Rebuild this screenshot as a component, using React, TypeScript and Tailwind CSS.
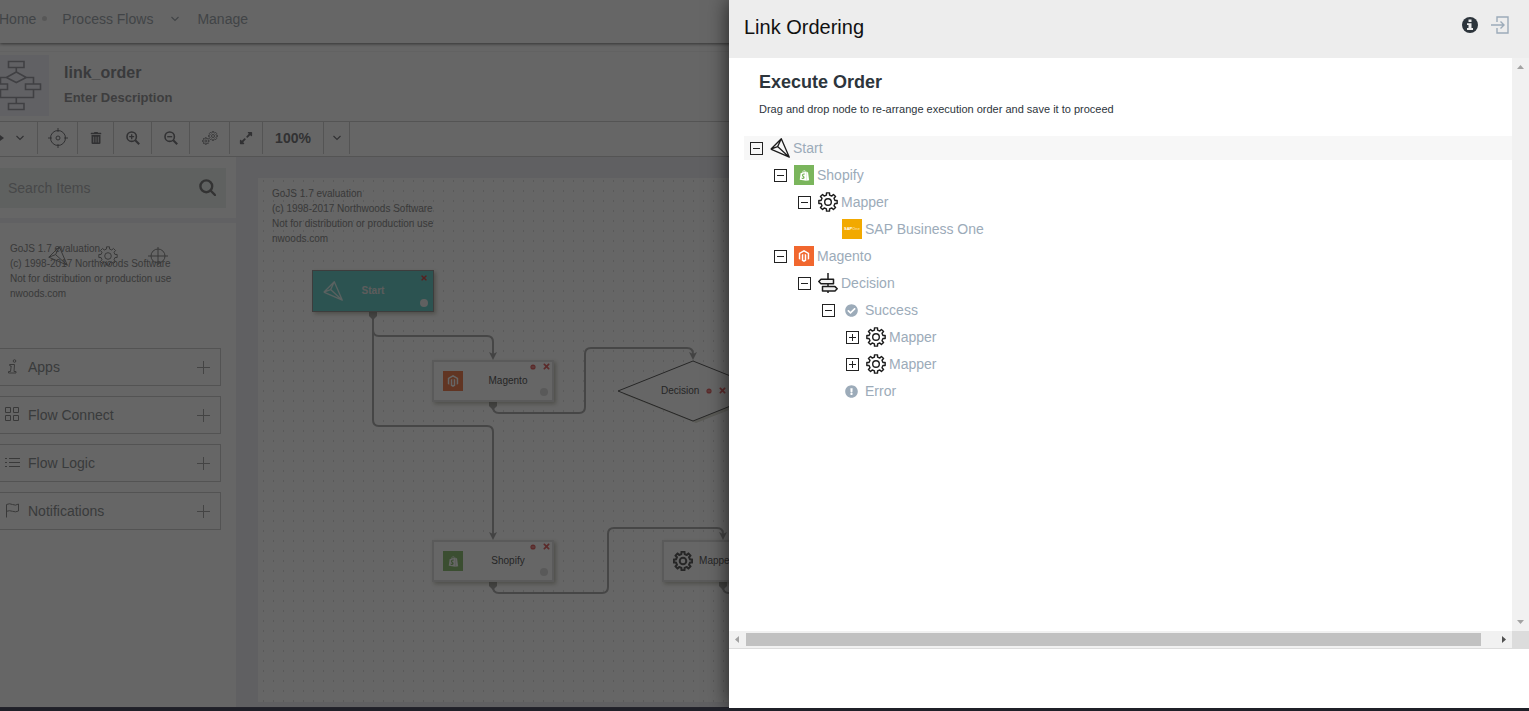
import React from "react";
import {
  FaCheckCircle,
  FaExclamationCircle,
  FaExpandAlt,
  FaMagento,
  FaShopify,
  FaTimes,
  FaTrashAlt,
} from "react-icons/fa";

function gearPath(cx: number, cy: number, outer: number, inner: number, teeth = 8) {
  const step = (Math.PI * 2) / teeth;
  const points: string[] = [];
  for (let i = 0; i < teeth; i++) {
    const a = i * step - Math.PI / 2;
    const corners: [number, number][] = [
      [-0.28, inner],
      [-0.21, outer],
      [0.21, outer],
      [0.28, inner],
    ];
    for (const [o, r] of corners) {
      points.push(`${(cx + r * Math.cos(a + o * step)).toFixed(2)} ${(cy + r * Math.sin(a + o * step)).toFixed(2)}`);
    }
  }
  return `M${points.join("L")}Z`;
}

type IconProps = { className?: string; weight?: number };

function Gear({ className = "size-5", weight = 1.4 }: IconProps) {
  return (
    <svg viewBox="0 0 20 20" className={className} fill="none" stroke="currentColor" strokeWidth={weight} strokeLinejoin="round" aria-hidden="true">
      <path d={gearPath(10, 10, 9.3, 7.1)} />
      <circle cx="10" cy="10" r="3.300" />
    </svg>
  );
}

function Plane({ className = "size-5", weight = 1.3 }: IconProps) {
  return (
    <svg viewBox="0 0 20 20" className={className} fill="none" stroke="currentColor" strokeWidth={weight} strokeLinejoin="round" aria-hidden="true">
      <path d="M.8 11.2 11.3.8l8 18.4L.8 11.2M11.3.8 7.6 8.6l11.7 10.6M7.6 8.6.8 11.2" />
    </svg>
  );
}

function Signpost() {
  return (
    <svg viewBox="0 0 20 20" className="size-5" fill="none" stroke="currentColor" strokeWidth="1.5" strokeLinejoin="round" aria-hidden="true">
      <path d="M10 0v6M10 11v2.500M10 18v2" />
      <path d="M3 6.200h12.500v4.600H3L.8 8.500ZM4.500 13.600h12.500l2.200 2.200-2.200 2.200h-12.500Z" fill="#f1f1f1" />
    </svg>
  );
}

function SearchIcon() {
  return (
    <svg viewBox="0 0 17 17" className="size-[17px]" fill="none" stroke="currentColor" strokeWidth="2.400" aria-hidden="true">
      <circle cx="7.300" cy="7.300" r="5.900" />
      <path d="m11.500 11.500 4.500 4.500" strokeLinecap="round" />
    </svg>
  );
}

function ZoomGlass({ plus = false }: { plus?: boolean }) {
  return (
    <svg viewBox="0 0 14 14" className="size-3.5" fill="none" stroke="currentColor" strokeWidth="1.600" aria-hidden="true">
      <circle cx="5.700" cy="5.700" r="4.700" />
      <path d="m9.200 9.200 4 4" strokeWidth="2" />
      <path d={plus ? "M3.200 5.700h5M5.700 3.200v5" : "M3.200 5.700h5"} strokeWidth="1.300" />
    </svg>
  );
}

function InfoBadge() {
  return (
    <svg viewBox="0 0 16 16" className="size-4" aria-hidden="true">
      <circle cx="8" cy="8" r="8" fill="currentColor" />
      <path d="M6.500 2.500h3v2.400h-3ZM5 6.200h4.500v4.800H11v2H5v-2h1.500V8H5Z" fill="#ededed" />
    </svg>
  );
}

function Target({ className }: IconProps) {
  return (
    <svg viewBox="0 0 20 20" className={className} fill="none" stroke="currentColor" aria-hidden="true">
      <circle cx="10" cy="10" r="7.500" />
      <circle cx="10" cy="10" r="2" />
      <path d="M10 0v4M10 16v4M0 10h4M16 10h4" />
    </svg>
  );
}

function Crosshair({ className }: IconProps) {
  return (
    <svg viewBox="0 0 20 20" className={className} fill="none" stroke="currentColor" aria-hidden="true">
      <circle cx="10" cy="10" r="7" />
      <path d="M10 1v18M0 10h20" />
    </svg>
  );
}

function Chevron() {
  return (
    <svg viewBox="0 0 8 6" className="h-[6px] w-[8px]" fill="none" stroke="currentColor" strokeWidth="1.2" aria-hidden="true">
      <path d="M.5 1 4 4.500 7.500 1" />
    </svg>
  );
}

function FlowLogo() {
  return (
    <svg viewBox="1 0 49 61" className="h-[61px] w-[49px] shrink-0 text-[#a0a0a8]" fill="none" stroke="currentColor" strokeWidth="1.6" aria-hidden="true">
      <path d="M9.500 6.500H25v6H9.500ZM17.300 12.500V17M17.300 17l10 5.500-10 5-10-5ZM27.300 22.500H34.500v6.500M7.300 22.500H1.500v6.500M26.500 29h15v5.500h-15ZM-7.500 29H8.500v5.500H-7.500ZM34.500 34.500v8h-33v-8M17.300 42.500V48M9.500 48.500H25v6H9.500Z" />
    </svg>
  );
}

function GridIcon() {
  return (
    <svg viewBox="0 0 15 14" className="h-3.5 w-[15px]" fill="none" stroke="currentColor" aria-hidden="true">
      <path d="M.5.5h5v5h-5ZM8.500.5h5v5h-5ZM.5 8.500h5v5h-5ZM8.500 8.500h5v5h-5Z" />
    </svg>
  );
}

function ListIcon() {
  return (
    <svg viewBox="0 0 15 14" className="h-3.5 w-[15px]" fill="none" stroke="currentColor" aria-hidden="true">
      <path d="M0 3.500h2M0 7.500h2M0 11.500h2M4 3.500h11M4 7.500h11M4 11.500h11" />
    </svg>
  );
}

function FlagIcon() {
  return (
    <svg viewBox="0 0 15 15" className="h-[15px] w-[15px]" fill="none" stroke="currentColor" aria-hidden="true">
      <path d="M1.500 14.500V1.500q3-1.500 6 0t6-.5v7q-3 1.500-6 .3t-6 0" />
    </svg>
  );
}

function InfoGlyph() {
  return (
    <svg viewBox="0 0 15 15" className="h-[15px] w-[15px]" fill="none" stroke="currentColor" aria-hidden="true">
      <circle cx="9.500" cy="2" r="1.300" />
      <path d="M4.500 5.500h5L9 12.500h2v1.500H3.500v-1.500H5.500L6.200 7H5Z" />
    </svg>
  );
}

const evaluationNotice = ["GoJS 1.7 evaluation", "(c) 1998-2017 Northwoods Software", "Not for distribution or production use", "nwoods.com"];

function Notice() {
  return (
    <div className="text-[10px] leading-[15px] text-[#909090]">
      {evaluationNotice.map((line) => (
        <p key={line} className="whitespace-nowrap">{line}</p>
      ))}
    </div>
  );
}

function ShopifyTile() {
  return (
    <span className="flex size-5 shrink-0 items-center justify-center bg-[#7ab55c] text-white">
      <FaShopify className="size-[11px]" />
    </span>
  );
}

function MagentoTile() {
  return (
    <span className="flex size-5 shrink-0 items-center justify-center bg-[#f1672e] text-white">
      <FaMagento className="size-3" />
    </span>
  );
}

function SapTile() {
  return (
    <span className="flex size-5 shrink-0 items-center justify-center overflow-hidden bg-[#f2a900] text-[4px] leading-none font-bold text-white">
      SAP<span className="text-[#f9d68a]">One</span>
    </span>
  );
}

function NodeMarks() {
  return (
    <span className="flex items-center gap-[6px] text-[#e46a6a]">
      <svg viewBox="0 0 6 6" className="size-1.5" aria-hidden="true">
        <circle cx="3" cy="3" r="2.600" fill="currentColor" />
        <path d="M1.500 3h3" stroke="#fff" strokeOpacity=".5" />
      </svg>
      <FaTimes className="size-[9px]" />
    </span>
  );
}

type FlowNodeProps = { place: string; icon: React.ReactNode; label: string; labelWidth?: string };

function FlowNode({ place, icon, label, labelWidth = "w-[90px]" }: FlowNodeProps) {
  return (
    <div className={`absolute flex h-[42px] w-[122px] items-center border-2 border-[#e0e0e0] bg-white pl-[9px] shadow-[2px_2px_4px_rgba(110,110,80,0.4)] ${place}`}>
      {icon}
      <span className={`shrink-0 pb-px text-center text-[10px] text-[#606060] ${labelWidth}`}>{label}</span>
      <span className="absolute inset-y-0 right-0 flex flex-col items-end justify-between pr-px pb-1">
        <NodeMarks />
        <span className="mr-[3px] size-2 rounded-full bg-[#dedede]" />
      </span>
    </div>
  );
}

function Canvas() {
  return (
    <div className="relative h-full overflow-hidden bg-white">
      <svg className="absolute inset-0 size-full" aria-hidden="true">
        <defs>
          <pattern id="dots" width="10" height="10" patternUnits="userSpaceOnUse">
            <path d="M5.500 2v2" stroke="#e0e0e0" />
          </pattern>
        </defs>
        <rect width="100%" height="100%" fill="url(#dots)" />
        <g fill="none" stroke="#aeaeae" strokeWidth="2">
          <path d="M115 140v102q0 6 6 6h108q6 0 6 6v104" />
          <path d="M115 140v12q0 6 6 6h108q6 0 6 6v14" />
          <path d="M235 226v3q0 6 6 6h80q6 0 6-6v-53q0-6 6-6h96q6 0 6 6v2" />
          <path d="M235 406v3q0 6 6 6h103q6 0 6-6v-53q0-6 6-6h103q6 0 6 6v2" />
          <path d="M465 406v3q0 6 6 6h103" />
        </g>
        <g fill="#a8a8a8">
          <path d="M111 134h8v4l-4 4-4-4ZM231 224h8v4l-4 4-4-4ZM231 404h8v4l-4 4-4-4ZM461 404h8v4l-4 4-4-4Z" />
          <path d="m235 182-4-8 4 2 4-2ZM235 362l-4-8 4 2 4-2ZM435 182l-4-8 4 2 4-2ZM465 362l-4-8 4 2 4-2Z" />
        </g>
        <path d="m438 186 74 30-74 29-73-29Z" fill="#e0e0d6" />
        <path d="m435 183 75 30-75 30-75-30Z" fill="#fff" stroke="#606060" />
      </svg>
      <div className="relative pt-2 pl-3.5">
        <Notice />
      </div>
      <div className="absolute top-[92px] left-[54px] flex h-[42px] w-[122px] items-center border border-[#999] bg-[#6fd0ca] pl-2.5 text-white shadow-[2px_2px_4px_rgba(110,110,80,0.4)]">
        <span className="text-[#e0f2f0]"><Plane /></span>
        <span className="flex-1 pb-px text-center text-[10px] font-bold text-[#e6e6e6]">Start</span>
        <span className="flex h-full w-[30px] flex-col items-end justify-between pt-[3px] pr-[5px] pb-1">
          <FaTimes className="size-2 text-[#d85050]" />
          <span className="size-2 rounded-full bg-[#f0f0f0]" />
        </span>
      </div>
      <FlowNode place="top-[182px] left-[174px]" icon={<span className="opacity-80"><MagentoTile /></span>} label="Magento" />
      <FlowNode place="top-[362px] left-[174px]" icon={<span className="opacity-80"><ShopifyTile /></span>} label="Shopify" />
      <FlowNode place="top-[362px] left-[404px]" icon={<span className="text-[#606060]"><Gear weight={2} /></span>} label="Mapper" labelWidth="w-[46px]" />
      <div className="absolute top-[205px] left-[403px] flex items-center gap-[7px] text-[10px] text-[#606060]">
        Decision
        <NodeMarks />
      </div>
    </div>
  );
}

function Tool({ width, label, children }: { width: string; label: string; children: React.ReactNode }) {
  return (
    <button type="button" aria-label={label} className={`flex h-8 shrink-0 items-center justify-center border-r border-[#d2d2d2] ${width}`}>
      {children}
    </button>
  );
}

function Toolbar() {
  return (
    <div className="flex h-9 shrink-0 items-start border-y border-[#d2d2d2] text-[#7c7c80]">
      <button type="button" aria-label="Run" className="flex h-8 w-[38px] items-center gap-3 border-r border-[#d2d2d2]">
        <svg viewBox="0 0 4 6" className="h-1.5 w-1" aria-hidden="true"><path d="M0 0l4 3-4 3Z" fill="currentColor" /></svg>
        <Chevron />
      </button>
      <Tool width="w-10" label="Locate"><Target className="size-5" /></Tool>
      <Tool width="w-9" label="Delete"><FaTrashAlt className="size-3" /></Tool>
      <Tool width="w-[38px]" label="Zoom in"><ZoomGlass plus /></Tool>
      <Tool width="w-[38px]" label="Zoom out"><ZoomGlass /></Tool>
      <Tool width="w-10" label="Settings">
        <svg viewBox="0 0 16 14" className="h-3.5 w-4" fill="none" stroke="currentColor" strokeWidth=".8" aria-hidden="true">
          <path d={gearPath(11, 5, 4.5, 3.4)} />
          <circle cx="11" cy="5" r="1.500" />
          <path d={gearPath(3.8, 10, 3.4, 2.5)} />
          <circle cx="3.800" cy="10" r="1" />
        </svg>
      </Tool>
      <Tool width="w-[33px]" label="Fit to screen"><FaExpandAlt className="size-[14px]" /></Tool>
      <span className="flex h-8 w-[61px] shrink-0 items-center justify-center border-r border-[#d2d2d2] text-sm font-bold">100%</span>
      <Tool width="w-[26px]" label="Zoom level"><Chevron /></Tool>
    </div>
  );
}

const groups = [
  { label: "Apps", icon: <InfoGlyph /> },
  { label: "Flow Connect", icon: <GridIcon /> },
  { label: "Flow Logic", icon: <ListIcon /> },
  { label: "Notifications", icon: <FlagIcon /> },
];

function Sidebar() {
  return (
    <aside className="flex w-[236px] shrink-0 flex-col bg-white">
      <div className="border-b-[5px] border-[#f2f2f8] pt-[11px] pr-2.5 pb-2.5">
        <div className="flex h-10 items-center bg-[#edf3f0] pr-2.5 pl-2">
          <input aria-label="Search Items" placeholder="Search Items" className="min-w-0 flex-1 bg-transparent text-sm outline-none placeholder:text-[#b2b4b6]" />
          <button type="button" aria-label="Search" className="pb-0.5 text-[#808080]"><SearchIcon /></button>
        </div>
      </div>
      <div className="relative h-[125px] pt-[18px] pl-2.5">
        <Notice />
        <div className="absolute top-[23px] left-[48px] flex gap-[30px] text-[#8c8c8c]">
          <Plane weight={1} />
          <Gear weight={1} />
          <Crosshair className="size-5" />
        </div>
      </div>
      <div className="flex flex-col gap-2.5 pr-[15px]">
        {groups.map((group) => (
          <button key={group.label} type="button" className="flex h-[38px] items-center border border-l-0 border-[#cfcfcf] pr-2.5 pl-[5px] text-sm text-[#909396]">
            <span className="pb-0.5 text-[#909090]">{group.icon}</span>
            <span className="flex-1 pl-2 text-left">{group.label}</span>
            <svg viewBox="0 0 13 13" className="size-[13px]" stroke="#aaa" aria-hidden="true"><path d="M0 6.500h13M6.500 0v13" /></svg>
          </button>
        ))}
      </div>
    </aside>
  );
}

function Editor() {
  return (
    <div className="flex min-h-0 flex-1 flex-col bg-white">
      <header className="flex h-[43px] shrink-0 items-center pb-1.5 text-sm text-[#a4abb1] shadow-[0_1px_3px_rgba(0,0,0,0.5)]">
        <a href="#home" className="-ml-px">Home</a>
        <span className="mx-1.5 size-[5px] rounded-full bg-[#dadada]" />
        <a href="#flows" className="ml-2 flex items-center gap-[18px] pl-px">Process Flows <Chevron /></a>
        <a href="#manage" className="ml-[18px]">Manage</a>
      </header>
      <section className="mt-2 flex h-[70px] shrink-0 items-start border-t border-[#f4f4f4] pt-[3px]">
        <div className="bg-[#f3f3fa]"><FlowLogo /></div>
        <div className="pt-2 pl-[15px] font-bold">
          <h1 className="text-base leading-5 text-[#909296]">link_order</h1>
          <p className="mt-[7px] text-[13px] leading-4 text-[#9a9a9c]">Enter Description</p>
        </div>
      </section>
      <Toolbar />
      <div className="flex min-h-0 flex-1">
        <Sidebar />
        <main className="min-w-0 flex-1 bg-[#f0f0f6] pt-[21px] pb-[5px] pl-[22px]">
          <Canvas />
        </main>
      </div>
    </div>
  );
}

type Row = { label: string; indent: string; toggle?: "open" | "closed"; icon: React.ReactNode };

const rows: Row[] = [
  { label: "Start", indent: "pl-1.5", toggle: "open", icon: <Plane /> },
  { label: "Shopify", indent: "pl-[30px]", toggle: "open", icon: <ShopifyTile /> },
  { label: "Mapper", indent: "pl-[54px]", toggle: "open", icon: <Gear /> },
  { label: "SAP Business One", indent: "pl-[78px]", icon: <SapTile /> },
  { label: "Magento", indent: "pl-[30px]", toggle: "open", icon: <MagentoTile /> },
  { label: "Decision", indent: "pl-[54px]", toggle: "open", icon: <Signpost /> },
  { label: "Success", indent: "pl-[78px]", toggle: "open", icon: <FaCheckCircle className="mr-px size-[13px] text-[#9cabb9]" /> },
  { label: "Mapper", indent: "pl-[102px]", toggle: "closed", icon: <Gear /> },
  { label: "Mapper", indent: "pl-[102px]", toggle: "closed", icon: <Gear /> },
  { label: "Error", indent: "pl-[78px]", icon: <FaExclamationCircle className="mr-px size-[13px] text-[#9cabb9]" /> },
];

function TreeRow({ row, active }: { row: Row; active: boolean }) {
  return (
    <li className={`flex h-6 items-center ${row.indent} ${active ? "bg-[#f7f7f7]" : ""}`}>
      {row.toggle ? (
        <button type="button" aria-label={row.toggle === "open" ? "Collapse" : "Expand"} className="size-[13px]">
          <svg viewBox="0 0 13 13" className="size-[13px]" fill="none" stroke="#222" shapeRendering="crispEdges" aria-hidden="true">
            <path d="M.5.5h12v12H.5ZM3 6.500h7" />
            {row.toggle === "closed" && <path d="M6.500 3v7" />}
          </svg>
        </button>
      ) : (
        <span className="w-[13px]" />
      )}
      <span className="mr-[3px] ml-[7px] flex size-5 items-center justify-center text-[#1c1c1c]">{row.icon}</span>
      <span className="text-sm leading-6 text-[#9cabb9]">{row.label}</span>
    </li>
  );
}

function Arrow({ d, color }: { d: string; color: string }) {
  return (
    <svg viewBox="0 0 17 17" className="size-[17px]" aria-hidden="true">
      <path d={d} fill={color} />
    </svg>
  );
}

function Drawer() {
  return (
    <section aria-label="Link Ordering" className="absolute top-0 right-0 bottom-[3px] z-20 flex w-[800px] max-w-full flex-col bg-white shadow-[0_0_20px_rgba(0,0,0,0.7)]">
      <header className="flex h-[58px] shrink-0 items-center justify-between bg-[#ededed] pr-5 pb-1 pl-[15px]">
        <h2 className="text-xl leading-6 text-[#111]">Link Ordering</h2>
        <div className="flex items-center gap-[13px] pb-1">
          <button type="button" aria-label="Information" className="text-[#2d353c]"><InfoBadge /></button>
          <button type="button" aria-label="Close panel" className="text-[#9cabb9]">
            <svg viewBox="0 0 18 18" className="size-[18px]" fill="none" stroke="currentColor" strokeWidth="1.4" aria-hidden="true">
              <path d="M6 6V1h11v16H6v-5M0 9h13M9.500 5.500 13 9l-3.500 3.500" />
            </svg>
          </button>
        </div>
      </header>
      <div className="flex min-h-0 flex-1">
        <div className="min-w-0 flex-1 pt-3 pl-[15px]">
          <div className="pl-[15px] text-[#2d353c]">
            <h3 className="text-lg leading-6 font-bold">Execute Order</h3>
            <p className="mt-[7px] text-[11px] leading-4">Drag and drop node to re-arrange execution order and save it to proceed</p>
          </div>
          <ul className="mt-[19px] flex flex-col gap-[3px]">
            {rows.map((row, i) => (
              <TreeRow key={i} row={row} active={i === 0} />
            ))}
          </ul>
        </div>
        <div className="flex w-[17px] flex-col justify-between bg-[#f1f1f1]">
          <Arrow d="M5 11h7L8.500 7Z" color="#a3a3a3" />
          <Arrow d="M5 6h7L8.500 10Z" color="#a3a3a3" />
        </div>
      </div>
      <div className="flex h-[18px] shrink-0 border-b border-[#dcdcdc] bg-[#f1f1f1]">
        <Arrow d="M10 5v7L6 8.500Z" color="#a3a3a3" />
        <div className="flex-1 py-0.5">
          <div className="mr-[14px] h-[13px] bg-[#c1c1c1]" />
        </div>
        <Arrow d="M7 5v7l4-3.500Z" color="#505050" />
        <div className="w-[17px] bg-[#dcdcdc]" />
      </div>
      <div className="h-[59px] shrink-0" />
    </section>
  );
}

export default function App() {
  return (
    <div className="relative flex h-screen flex-col overflow-hidden bg-[#23232b] font-['Liberation_Sans',Arial,sans-serif]">
      <Editor />
      <div className="relative z-30 mt-px h-[3px] shrink-0 bg-[#1f2028]" />
      <div className="absolute inset-x-0 top-0 bottom-1 z-10 bg-black/60" />
      <Drawer />
    </div>
  );
}
